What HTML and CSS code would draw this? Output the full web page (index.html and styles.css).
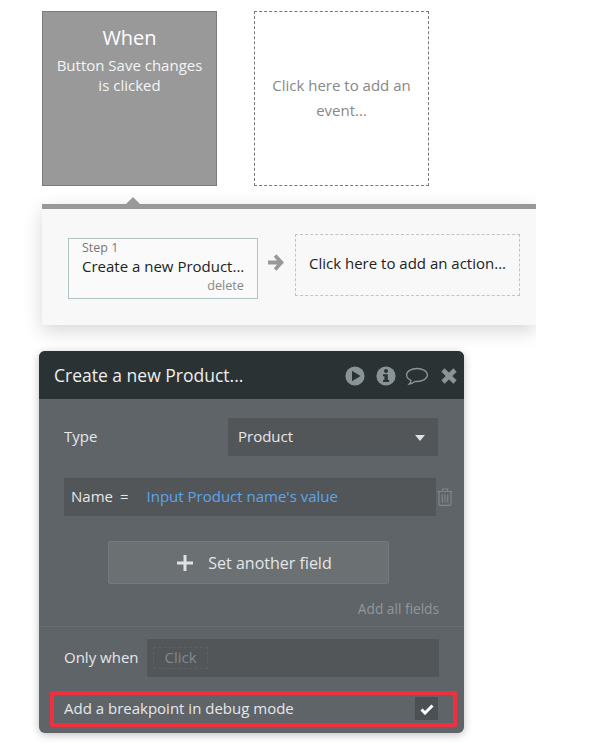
FILE: index.html
```html
<!DOCTYPE html>
<html lang="en">
<head>
<meta charset="utf-8">
<title>Workflow</title>
<link rel="stylesheet" href="styles.css">
</head>
<body>
<div class="page">
  <div class="events">
    <div class="event event-active">
      <div class="event-title">When</div>
      <div class="event-desc">Button Save changes is clicked</div>
    </div>
    <div class="event event-add">Click here to add an event...</div>
  </div>
  <div class="panel">
    <div class="panel-notch"></div>
    <div class="step">
      <div class="step-num">Step 1</div>
      <div class="step-name">Create a new Product...</div>
      <div class="step-del">delete</div>
    </div>
    <svg class="step-arrow" viewBox="0 0 16 17" width="16" height="17"><path d="M8.4 0.2 L16 8.5 L8.4 16.8 L5.8 14.3 L9 10.6 H0 V6.4 H9 L5.8 2.7 Z" fill="#999"/></svg>
    <div class="action-add">Click here to add an action...</div>
  </div>
  <div class="dialog">
    <div class="dialog-head">
      <div class="dialog-title">Create a new Product...</div>
      <svg class="ic" viewBox="0 0 20 20" width="20" height="20"><circle cx="10" cy="10" r="9.6" fill="#8a9497"/><path d="M7 4.8 L15.5 10 L7 15.2 Z" fill="#2b3234"/></svg>
      <svg class="ic" viewBox="0 0 20 20" width="20" height="20"><circle cx="10" cy="10" r="9.6" fill="#8a9497"/><circle cx="10" cy="5" r="2" fill="#2b3234"/><path d="M7 8.2 H11.8 V14 H13.2 V16 H7 V14 H8.4 V10.2 H7 Z" fill="#2b3234"/></svg>
      <svg class="ic ic-chat" viewBox="0 0 24 20" width="24" height="20"><path d="M12 2.5 C6.3 2.5 1.6 5.4 1.6 9 C1.6 11.4 3.4 13.2 6 14.3 C5.9 15.8 5.3 17 4.3 18 C6.6 17.6 8.4 16.7 9.8 15.4 C10.5 15.5 11.2 15.5 12 15.5 C17.7 15.5 22.4 12.6 22.4 9 C22.4 5.4 17.7 2.5 12 2.5 Z" fill="none" stroke="#8a9497" stroke-width="1.3"/></svg>
      <svg class="ic ic-close" viewBox="0 0 16 16" width="16" height="16"><path d="M2 2 L14 14 M14 2 L2 14" stroke="#8a9497" stroke-width="4.6"/></svg>
    </div>
    <div class="dialog-body">
      <div class="row-type">
        <div class="label">Type</div>
        <div class="select">Product<span class="caret"></span></div>
      </div>
      <div class="row-name">
        <div class="field-name"><span class="name-key">Name</span><span class="name-eq">=</span><span class="name-val">Input Product name's value</span></div>
        <svg class="trash" viewBox="0 0 16 18" width="16" height="18"><path d="M0.5 3.5 H15.5 M5.5 3.5 V1 H10.5 V3.5 M2 3.5 V16 Q2 17.3 3.3 17.3 H12.7 Q14 17.3 14 16 V3.5 M5.3 6.5 V14.5 M8 6.5 V14.5 M10.7 6.5 V14.5" fill="none" stroke="#7f8689" stroke-width="1.2"/></svg>
      </div>
      <div class="add-field">
        <svg class="plus" viewBox="0 0 18 18" width="18" height="18"><path d="M9 1 V17 M1 9 H17" stroke="#dfe1e2" stroke-width="3"/></svg>
        <span>Set another field</span>
      </div>
      <div class="add-all">Add all fields</div>
    </div>
    <div class="dialog-foot">
      <div class="row-when">
        <div class="label when-label">Only when</div>
        <div class="when-field"><span class="click-chip">Click</span></div>
      </div>
      <div class="row-break">
        <span class="break-text">Add a breakpoint in debug mode</span>
        <span class="check"><svg viewBox="0 0 14 12" width="14" height="12"><path d="M1.5 6.5 L5 10 L12.5 2.5" fill="none" stroke="#fff" stroke-width="3"/></svg></span>
      </div>
    </div>
  </div>
</div>
</body>
</html>
```
FILE: styles.css
```css
* { box-sizing: border-box; }
html, body { margin: 0; padding: 0; background: #fff; }
body { font-family: "Open Sans", "Noto Sans", sans-serif; width: 605px; height: 744px; overflow: hidden; }
.page { padding: 11px 0 0 39px; }

.events { display: flex; gap: 37px; margin-left: 3px; }
.event { width: 175px; height: 175px; text-align: center; }
.event-active { background: #999; border: 1px solid #7b7b7b; color: #fff; padding: 12px 10px 0; }
.event-title { font-size: 20px; line-height: 28px; }
.event-desc { font-size: 15px; line-height: 20px; margin-top: 3px; color: #f4f4f4; }
.event-add { border: 1px dashed #777; color: #888; font-size: 15px; line-height: 25px; padding: 61px 12px 0; }

.panel { position: relative; width: 494px; height: 121px; margin: 18px 0 0 3px; background: #f8f8f8; border-top: 5px solid #999; box-shadow: 0 6px 18px rgba(0,0,0,.16); clip-path: inset(-30px 0 -30px -30px); display: flex; align-items: flex-start; padding: 25px 0 0 26px; }
.panel-notch { position: absolute; left: 83px; top: -12px; width: 0; height: 0; border-left: 8px solid transparent; border-right: 8px solid transparent; border-bottom: 8px solid #999; }
.step { width: 190px; height: 61px; margin-top: 4px; border: 1px solid #b1c3c3; background: #fafafa; padding: 1px 13px 0; position: relative; }
.step-num { font-size: 12.5px; line-height: 16px; color: #777; }
.step-name { font-size: 15px; line-height: 21px; color: #222; white-space: nowrap; }
.step-del { font-size: 12.7px; line-height: 16px; color: #888; text-align: right; }
.step-arrow { margin: 20px 0 0 10px; flex: none; }
.action-add { width: 225px; height: 62px; margin-left: 11px; border: 1px dashed #bcc6c6; font-size: 15px; line-height: 56px; color: #222; padding-left: 13px; white-space: nowrap; }

.dialog { width: 425px; height: 382px; margin-top: 26px; border-radius: 6px; background: #5f6468; box-shadow: 0 2px 8px rgba(0,0,0,.25); overflow: hidden; }
.dialog-head { height: 48px; background: #2b3234; display: flex; align-items: center; padding-right: 7px; color: #eee; }
.dialog-title { font-size: 17.5px; margin-left: 15px; flex: 1; }
.ic { margin: 2px 0 0 11px; flex: none; }
.ic-chat { margin-left: 9px; }
.ic-close { margin-left: 12px; }

.dialog-body { padding: 19px 26px 0 25px; height: 228px; border-bottom: 1px solid #696e71; position: relative; }
.label { font-size: 15px; color: #e6e7e8; }
.row-type { display: flex; align-items: center; height: 38px; }
.row-type .label { width: 164px; margin-top: -2px; }
.select { width: 210px; height: 38px; background: #525659; color: #e6e7e8; font-size: 15px; line-height: 36px; padding-left: 10px; position: relative; }
.caret { position: absolute; right: 13px; top: 17px; width: 0; height: 0; border-left: 5px solid transparent; border-right: 5px solid transparent; border-top: 6px solid #dfe1e2; }
.row-name { display: flex; align-items: center; margin-top: 22px; }
.field-name { width: 372px; height: 38px; background: #525659; font-size: 15px; line-height: 37px; padding-left: 7px; display: flex; flex: none; }
.name-key { color: #e6e7e8; }
.name-eq { color: #e6e7e8; margin-left: 7px; }
.name-val { color: #5aa5ee; margin-left: 18px; }
.trash { margin-left: 1px; flex: none; }
.add-field { width: 281px; height: 43px; margin: 25px 0 0 44px; padding-left: 11px; background: #6b7072; border: 1px solid #74797b; border-radius: 2px; display: flex; align-items: center; justify-content: center; gap: 14px; font-size: 16px; color: #e6e7e8; }
.add-all { font-size: 13.7px; color: #92979a; text-align: right; margin-top: 16px; line-height: 18px; margin-right: -1px; }

.dialog-foot { padding: 12px 0 0 11px; }
.row-when { display: flex; align-items: center; height: 38px; padding-left: 14px; }
.when-label { width: 83px; flex: none; margin-top: -2px; }
.when-field { width: 292px; height: 38px; background: #525659; padding: 8px 0 0 6px; }
.click-chip { display: block; width: 55px; height: 22px; border: 1px dashed #5b6063; color: #83888b; font-size: 15px; line-height: 19px; text-align: center; }
.row-break { width: 407px; height: 36px; margin-top: 14px; border: 4px solid #ee3040; border-radius: 2px; display: flex; align-items: center; justify-content: space-between; padding: 0 15px 0 10px; font-size: 15px; color: #e6e7e8; }
.break-text { margin-top: -2px; }
.check { width: 23px; height: 23px; background: #4c5053; display: flex; align-items: center; justify-content: center; margin-top: -1px; }
```
